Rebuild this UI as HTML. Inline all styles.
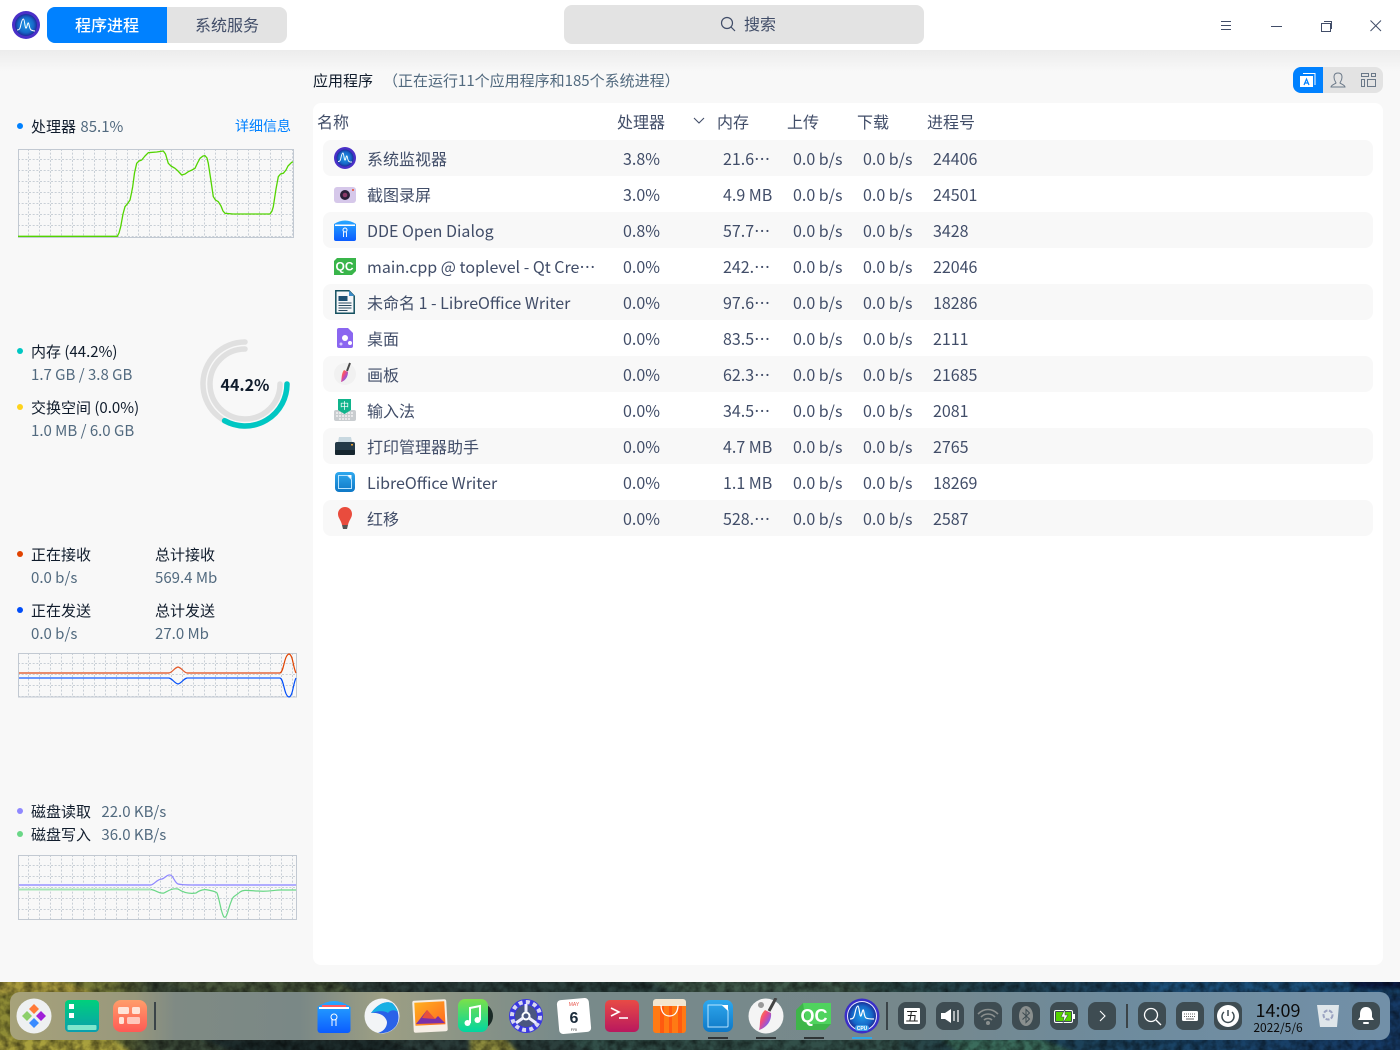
<!DOCTYPE html>
<html lang="zh"><head><meta charset="utf-8"><title>系统监视器</title>
<style>
*{box-sizing:border-box;margin:0;padding:0}
html,body{width:1400px;height:1050px;overflow:hidden;background:#f8f8f8;font-family:"Noto Sans CJK SC","Liberation Sans",sans-serif;font-size:15px;color:#414d68}
.a{position:absolute;white-space:nowrap}
.k{color:#101c2c}.g{color:#526a7f}
.dot{position:absolute;width:6px;height:6px;border-radius:50%}
.row{position:absolute;left:313px;width:1070px;height:36px;font-size:16px;line-height:36px}
.row.s::before{content:"";position:absolute;left:10px;right:10px;top:0;bottom:0;background:#f8f8f8;border-radius:8px}
.row span{position:absolute;top:0;white-space:nowrap}
.row span:nth-of-type(1){left:54px}.row span:nth-of-type(2){left:310px}.row span:nth-of-type(3){left:410px}.row span:nth-of-type(4){left:480px}.row span:nth-of-type(5){left:550px}.row span:nth-of-type(6){left:620px}
.row svg{position:absolute;left:20px;top:6px;width:24px;height:24px}
.th{position:absolute;top:109px;font-size:16px;line-height:24px}
.tray{position:absolute;top:1002px;width:28px;height:28px;border-radius:8px;background:#3e4c52}
.tray svg{position:absolute;left:0;top:0;width:28px;height:28px}
.di{position:absolute;top:998px;width:36px;height:36px}
.run{position:absolute;top:1037px;width:20px;height:2px;background:#2f3436}
.sep{position:absolute;width:2px;background:#3b4448}
</style></head><body>

<!-- wallpaper -->
<svg class="a" style="left:0;top:982px" width="1400" height="68" viewBox="0 0 1400 68">
<defs>
<linearGradient id="wp" x1="0" x2="1" y1="0" y2="0"><stop offset="0" stop-color="#8f8c35"/><stop offset=".08" stop-color="#6f7538"/><stop offset=".11" stop-color="#3c4a38"/><stop offset=".3" stop-color="#2b3c3a"/><stop offset=".5" stop-color="#2c4340"/><stop offset=".62" stop-color="#2f4a44"/><stop offset=".72" stop-color="#1f4050"/><stop offset=".85" stop-color="#1a4468"/><stop offset="1" stop-color="#163a66"/></linearGradient>
<linearGradient id="dk" x1="0" x2="1" y1="0" y2="0"><stop offset="0" stop-color="#a7a27a"/><stop offset=".09" stop-color="#98987c"/><stop offset=".12" stop-color="#7f8a84"/><stop offset=".21" stop-color="#7a8886"/><stop offset=".27" stop-color="#9d9f84"/><stop offset=".33" stop-color="#8a9486"/><stop offset=".4" stop-color="#788a8a"/><stop offset=".65" stop-color="#76888c"/><stop offset=".8" stop-color="#6e8b9d"/><stop offset="1" stop-color="#7290a8"/></linearGradient>
<radialGradient id="mon"><stop offset="0" stop-color="#1f9be8"/><stop offset=".7" stop-color="#1668c8"/><stop offset="1" stop-color="#1a2f9a"/></radialGradient>
<linearGradient id="tl" x1="0" x2="0" y1="0" y2="1"><stop offset="0" stop-color="#00d07c"/><stop offset="1" stop-color="#0a9fae"/></linearGradient>
<linearGradient id="or" x1="0" x2="0" y1="0" y2="1"><stop offset="0" stop-color="#ff9d6a"/><stop offset="1" stop-color="#ff5a55"/></linearGradient>
<linearGradient id="bl" x1="0" x2="0" y1="0" y2="1"><stop offset="0" stop-color="#28a8ff"/><stop offset="1" stop-color="#0b5cff"/></linearGradient>
<linearGradient id="ws" x1="0" x2="0" y1="0" y2="1"><stop offset="0" stop-color="#2fa8ee"/><stop offset="1" stop-color="#0f78c6"/></linearGradient>
<linearGradient id="ms" x1="0" x2="0" y1="0" y2="1"><stop offset="0" stop-color="#7be04a"/><stop offset="1" stop-color="#00d6a0"/></linearGradient>
<linearGradient id="tm" x1="0" x2="0" y1="0" y2="1"><stop offset="0" stop-color="#e84b45"/><stop offset="1" stop-color="#b9185e"/></linearGradient>
<linearGradient id="ph" x1="0" x2="1" y1="0" y2="1"><stop offset="0" stop-color="#ffb020"/><stop offset="1" stop-color="#ff6a20"/></linearGradient>
<linearGradient id="pk" x1="0" x2="1" y1="0" y2="1"><stop offset="0" stop-color="#ff9b1f"/><stop offset=".4" stop-color="#f04a80"/><stop offset=".75" stop-color="#7a5cf0"/><stop offset="1" stop-color="#32b8f0"/></linearGradient>
<filter id="bur"><feGaussianBlur stdDeviation="2"/></filter>
<filter id="mot" x="0" y="0" width="100%" height="100%"><feTurbulence type="fractalNoise" baseFrequency=".12" numOctaves="3" seed="4"/><feColorMatrix values="0 0 0 0 0 0 0 0 0 0 0 0 0 0 0 1.800 0 0 0 -.55"/></filter>
</defs>
<rect width="1400" height="68" fill="url(#wp)"/>
<g filter="url(#bur)">
<path d="M-5-5H55L95 12H-5Z" fill="#a89a3e"/><path d="M-5 56H112L135 73H-5Z" fill="#a9a03c"/>
<path d="M150-5H330L360 12H200Z" fill="#46543a"/><path d="M640-5H830L880 12H680Z" fill="#3f5a4c"/>
<path d="M200 56H380L420 73H240Z" fill="#1d2a2c"/><path d="M470 56H505L520 73H470Z" fill="#8c8a3c"/><path d="M560 56H900V73H600Z" fill="#314f48"/>
<path d="M1120-5H1405V12H1150Z" fill="#1f4f78"/><path d="M940 56H1040L1080 73H960Z" fill="#3a6c5c"/>
<path d="M1340-5H1405V8H1360Z" fill="#0b1f44"/>
</g>
<rect width="1400" height="68" filter="url(#mot)" opacity=".55"/>
<rect x="10" y="10" width="1380" height="48" rx="10" fill="url(#dk)"/>
</svg>

<!-- titlebar -->
<div class="a" style="left:0;top:50px;width:1400px;height:22px;background:linear-gradient(#ececec,#f8f8f8)"></div>
<div class="a" style="left:0;top:0;width:1400px;height:50px;background:#fff"></div>

<svg class="a" style="left:11px;top:10px" width="30" height="30" viewBox="0 0 30 30">
<circle cx="15" cy="15" r="14" fill="#4a30c8"/><circle cx="15" cy="15" r="11" fill="url(#mon)"/>
<path d="M6 20c2.500 0 3-1 3.800-5s1.700-6 2.700-6 1.300 8 2.300 9 1.300-4 2.300-5 1 6 3 7 2 1 3.900 1" fill="none" stroke="#fff" stroke-width="1"/></svg>

<div class="a" style="left:47px;top:7px;width:240px;height:36px;border-radius:8px;background:#e3e3e3;overflow:hidden">
<div class="a" style="left:0;top:-1px;width:120px;height:37px;background:#0081ff;color:#fff;font-size:16px;line-height:36px;text-align:center;font-weight:500">程序进程</div>
<div class="a" style="left:120px;top:-1px;width:120px;height:36px;color:#414d68;font-size:16px;line-height:36px;text-align:center">系统服务</div>
</div>

<div class="a" style="left:564px;top:5px;width:360px;height:39px;border-radius:8px;background:#e3e3e3"></div>
<svg class="a" style="left:720px;top:16px" width="16" height="16" viewBox="0 0 16 16" fill="none" stroke="#414d68" stroke-width="1.2"><circle cx="7" cy="7" r="5.500"/><path d="M11 11l4 4"/></svg>
<div class="a" style="left:744px;top:11px;font-size:16px;line-height:24px;color:#414d68">搜索</div>

<svg class="a" style="left:1200px;top:0" width="200" height="50" viewBox="0 0 200 50" fill="none" stroke="#414d68" stroke-width="1">
<path d="M21 21.500H31M21 25.500H31M21 29.500H31"/><path d="M71 26.500H82"/>
<rect x="121.500" y="23.500" width="9" height="8"/><path d="M124 21.500H131.500V29"/>
<path d="M170.500 20.500L181 31M181 20.500L170.500 31"/></svg>

<!-- main -->
<div class="a" style="left:313px;top:103px;width:1070px;height:862px;background:#fff;border-radius:8px"></div>
<div class="a k" style="left:313px;top:69px;font-size:15px;line-height:24px">应用程序</div>
<div class="a" style="left:383px;top:69px;font-size:15px;line-height:24px;color:#526a7f">（正在运行11个应用程序和185个系统进程）</div>

<div class="a" style="left:1293px;top:67px;width:90px;height:26px;border-radius:8px;background:#e3e3e3;overflow:hidden"><div class="a" style="left:0;top:0;width:30px;height:26px;background:#0081ff"></div></div>
<svg class="a" style="left:1293px;top:67px" width="90" height="26" viewBox="0 0 90 26" fill="none">
<rect x="7" y="9" width="13" height="11" fill="#fff"/><path d="M10 6.500H22V18" stroke="#fff"/>
<path d="M11 18l2.500-6 2.500 6M12 16h3" stroke="#0081ff" stroke-width="1.200"/>
<path d="M38 20c0-2 4-3 5-4 0-1-2-2-2-6 0-3 2-4 4-4s4 1 4 4c0 4-2 5-2 6 1 1 5 2 5 4z" stroke="#6a7888"/>
<path d="M68.500 6.500H75.500V9.500H68.500zM78.500 6.500H82.500V9.500H78.500zM68.500 12.500H71.500V19.500H68.500zM74.500 12.500H82.500V19.500H74.500z" stroke="#6a7888"/></svg>

<!-- table header -->
<div class="th" style="left:317px">名称</div>
<div class="th" style="left:617px">处理器</div>
<svg class="a" style="left:693px;top:117px" width="12" height="8" viewBox="0 0 12 8" fill="none" stroke="#414d68" stroke-width="1.100"><path d="M1 1l5 5 5-5"/></svg>
<div class="th" style="left:717px">内存</div>
<div class="th" style="left:787px">上传</div>
<div class="th" style="left:857px">下载</div>
<div class="th" style="left:927px">进程号</div>

<!-- rows -->
<div class="row s" style="top:140px"><svg viewBox="0 0 24 24"><circle cx="12" cy="12" r="11" fill="#4a30c8"/><circle cx="12" cy="12" r="8.500" fill="url(#mon)"/><path d="M5 15.500c2 0 2.300-.7 3-4s1.300-4.500 2-4.500 1 6 1.800 7 1-3 1.800-4 .8 4.500 2.400 5.500 1.500.5 3 .5" fill="none" stroke="#fff" stroke-width=".9"/></svg><span>系统监视器</span><span>3.8%</span><span>21.6…</span><span>0.0 b/s</span><span>0.0 b/s</span><span>24406</span></div>
<div class="row" style="top:176px"><svg viewBox="0 0 24 24"><rect x="1" y="5" width="22" height="16" rx="3" fill="#d6c8ea"/><circle cx="12" cy="13" r="5" fill="#2a2038"/><circle cx="12" cy="13" r="2.300" fill="#8a3a68"/><rect x="19" y="7" width="2" height="2" fill="#e86a5a"/></svg><span>截图录屏</span><span>3.0%</span><span>4.9 MB</span><span>0.0 b/s</span><span>0.0 b/s</span><span>24501</span></div>
<div class="row s" style="top:212px"><svg viewBox="0 0 24 24"><path d="M1 6Q12-1 23 6V21a2 2 0 0 1-2 2H3a2 2 0 0 1-2-2z" fill="url(#bl)"/><path d="M2 6.500h20v1.500H2z" fill="#fff"/><circle cx="12" cy="12" r="2" fill="none" stroke="#fff"/><path d="M10.500 14v5M13.500 14v5" stroke="#fff" stroke-width=".9"/></svg><span>DDE Open Dialog</span><span>0.8%</span><span>57.7…</span><span>0.0 b/s</span><span>0.0 b/s</span><span>3428</span></div>
<div class="row" style="top:248px"><svg viewBox="0 0 24 24"><path d="M4 4h19v13l-4 4H1V7z" fill="#39b54a"/><text x="11.500" y="16.500" font-size="12" font-weight="700" text-anchor="middle" fill="#fff" font-family="Liberation Sans,sans-serif">QC</text></svg><span>main.cpp @ toplevel - Qt Cre…</span><span>0.0%</span><span>242.…</span><span>0.0 b/s</span><span>0.0 b/s</span><span>22046</span></div>
<div class="row s" style="top:284px"><svg viewBox="0 0 24 24"><path d="M2.800 .8H16L21.200 6V23.200H2.800z" fill="#f4f6f8" stroke="#14505f" stroke-width="1.500"/><path d="M16 .5V6H21.500z" fill="#3c8cc8"/><rect x="5.500" y="6" width="9" height="5" fill="#1c4f72"/><path d="M5.500 13h13M5.500 15.500h13M5.500 18h13M5.500 20.500h9" stroke="#2a4a60"/></svg><span>未命名 1 - LibreOffice Writer</span><span>0.0%</span><span>97.6…</span><span>0.0 b/s</span><span>0.0 b/s</span><span>18286</span></div>
<div class="row" style="top:320px"><svg viewBox="0 0 24 24"><path d="M4 4a2 2 0 0 1 2-2h9l5 5v13a2 2 0 0 1-2 2H6a2 2 0 0 1-2-2z" fill="#8a66f0"/><circle cx="12" cy="12" r="3" fill="#fff"/><circle cx="17" cy="17" r="2" fill="#fff"/><circle cx="8" cy="18" r="1.500" fill="#d8ccff"/></svg><span>桌面</span><span>0.0%</span><span>83.5…</span><span>0.0 b/s</span><span>0.0 b/s</span><span>2111</span></div>
<div class="row s" style="top:356px"><svg viewBox="0 0 24 24"><circle cx="12" cy="12" r="11" fill="#f1f1f1"/><path d="M17 1l-3 8" stroke="#4a4a4a" stroke-width="2"/><path d="M11 8l4 2c0 5-3 9-7 10 1-3 0-8 3-12z" fill="url(#pk)"/></svg><span>画板</span><span>0.0%</span><span>62.3…</span><span>0.0 b/s</span><span>0.0 b/s</span><span>21685</span></div>
<div class="row" style="top:392px"><svg viewBox="0 0 24 24"><rect x="1" y="12" width="22" height="11" rx="2" fill="#c9cdd0"/><path d="M3 15h18M3 18h18M6 21h12" stroke="#f2f2f2" stroke-width="1.400" stroke-dasharray="2 1"/><path d="M5 1h13v11l-6.500 4L5 12z" fill="#10b48c"/><text x="11.500" y="11" font-size="9" text-anchor="middle" fill="#fff">中</text></svg><span>输入法</span><span>0.0%</span><span>34.5…</span><span>0.0 b/s</span><span>0.0 b/s</span><span>2081</span></div>
<div class="row s" style="top:428px"><svg viewBox="0 0 24 24"><path d="M6 3h12l1 5H5z" fill="#c8d8e0"/><rect x="2" y="8" width="20" height="13" rx="2" fill="#243a48"/><rect x="2" y="16" width="20" height="5" rx="1" fill="#16262f"/><rect x="18" y="10" width="2" height="1.500" fill="#e8a030"/></svg><span>打印管理器助手</span><span>0.0%</span><span>4.7 MB</span><span>0.0 b/s</span><span>0.0 b/s</span><span>2765</span></div>
<div class="row" style="top:464px"><svg viewBox="0 0 24 24"><rect x="2" y="2" width="20" height="20" rx="4" fill="url(#ws)"/><path d="M5.500 5.500h9L18.500 9.500V18.500H5.500z" fill="none" stroke="#b8e4ff"/><path d="M14.500 5h4v4z" fill="#fff"/></svg><span>LibreOffice Writer</span><span>0.0%</span><span>1.1 MB</span><span>0.0 b/s</span><span>0.0 b/s</span><span>18269</span></div>
<div class="row s" style="top:500px"><svg viewBox="0 0 24 24"><path d="M12 1c4 0 7 3 7 7 0 4-3 6-4 11H9C8 14 5 12 5 8c0-4 3-7 7-7z" fill="#e94c3d"/><path d="M9 19h6l-1 4h-4z" fill="#555"/></svg><span>红移</span><span>0.0%</span><span>528.…</span><span>0.0 b/s</span><span>0.0 b/s</span><span>2587</span></div>

<!-- CPU -->
<div class="dot" style="left:17px;top:123px;background:#0081ff"></div>
<div class="a k" style="left:31px;top:115px;line-height:24px">处理器 <span class="g" style="margin-left:1px">85.1%</span></div>
<div class="a" style="left:235px;top:114px;line-height:24px;font-size:14px;color:#0081ff">详细信息</div>
<svg class="a" style="left:18px;top:149px" width="277" height="90" viewBox="0 0 277 90" fill="none">
<defs><pattern id="gr" width="11" height="11" patternUnits="userSpaceOnUse"><path d="M10.500 0V11M0 10.500H11" stroke="#c8cfd6" stroke-width="1" stroke-dasharray="2 1.670"/></pattern></defs>
<rect x=".5" y=".5" width="275" height="88" fill="url(#gr)" stroke="#c2c9d2"/>
<polyline stroke-linejoin="round" points="0,87.300 99.300,87.300 101,84 102.700,77.700 105,65 107,57.700 110,54 112,51 113.500,44 114.700,37.700 116.500,24 118.700,14.300 121,12 123.700,11 127,7 130.300,3.700 138.700,3 145.300,2 147.500,5 150.300,14.300 153,17 157,19.300 160,22 163.700,26 167,25 170.300,22.700 174,21 177,19.300 179.500,14 182,9.300 185,7 187,6.700 189,9 190.300,14.300 193,32 195.300,47.700 197.500,51 200.300,52.700 203,57 205,62 207,64.300 215,65 252,65 254,62 255.300,57.700 258,40 260.300,27.700 262.500,25 265.300,24.300 268,21 270,17 273.700,13.300 275,13" stroke="#52d400" stroke-width="1.300"/></svg>

<!-- memory -->
<div class="dot" style="left:17px;top:348px;background:#00c7c3"></div>
<div class="a k" style="left:31px;top:340px;line-height:24px">内存 (44.2%)</div>
<div class="a g" style="left:31px;top:363px;line-height:24px">1.7 GB / 3.8 GB</div>
<div class="dot" style="left:17px;top:404px;background:#fed31c"></div>
<div class="a k" style="left:31px;top:396px;line-height:24px">交换空间 (0.0%)</div>
<div class="a g" style="left:31px;top:419px;line-height:24px">1.0 MB / 6.0 GB</div>
<svg class="a" style="left:195px;top:334px" width="100" height="100" viewBox="0 0 100 100" fill="none" stroke-linecap="round" stroke-width="5.500">
<path d="M92 50A42 42 0 1 1 50 8" stroke="#e0e0e0"/>
<path d="M85 50A35 35 0 1 1 50 15" stroke="#e0e0e0"/>
<path d="M92 50A42 42 0 0 1 29.600 86.700" stroke="#00c7c3"/></svg>
<div class="a" style="left:195px;top:372px;width:100px;text-align:center;font-size:16px;line-height:24px;font-weight:700;color:#101c2c">44.2%</div>

<!-- network -->
<div class="dot" style="left:17px;top:551px;background:#e14300"></div>
<div class="a k" style="left:31px;top:543px;line-height:24px">正在接收</div>
<div class="a g" style="left:31px;top:566px;line-height:24px">0.0 b/s</div>
<div class="a k" style="left:155px;top:543px;line-height:24px">总计接收</div>
<div class="a g" style="left:155px;top:566px;line-height:24px">569.4 Mb</div>
<div class="dot" style="left:17px;top:607px;background:#004df9"></div>
<div class="a k" style="left:31px;top:599px;line-height:24px">正在发送</div>
<div class="a g" style="left:31px;top:622px;line-height:24px">0.0 b/s</div>
<div class="a k" style="left:155px;top:599px;line-height:24px">总计发送</div>
<div class="a g" style="left:155px;top:622px;line-height:24px">27.0 Mb</div>
<svg class="a" style="left:18px;top:653px" width="280" height="46" viewBox="0 0 280 46" fill="none">
<defs><pattern id="gr2" width="11" height="11" patternUnits="userSpaceOnUse"><path d="M10.500 0V11M0 10.500H11" stroke="#c8cfd6" stroke-width="1" stroke-dasharray="2 1.670"/></pattern></defs>
<rect x=".5" y=".5" width="278" height="43.500" fill="url(#gr2)" stroke="#c2c9d2"/>
<path d="M1 20H151" stroke="#e98c6c" stroke-width="2"/>
<path d="M151 20C155 19 156 15 160 14 164 15 165 19 169 20" stroke="#e2592a" stroke-width="1.200"/>
<path d="M169 20H262" stroke="#e98c6c" stroke-width="2"/>
<path d="M262 20C266 19 266 2 271 1 275 2 275 14 278 20" stroke="#e14300" stroke-width="1.200"/>
<path d="M1 25H151" stroke="#3a78ff" stroke-width="1.600"/>
<path d="M151 25C155 26 156 30 160 31 164 30 165 26 169 25" stroke="#004df9" stroke-width="1.200"/>
<path d="M169 25H262" stroke="#3a78ff" stroke-width="1.600"/>
<path d="M262 25C266 26 266 43 271 44 275 43 275 31 278 25" stroke="#004df9" stroke-width="1.200"/></svg>

<!-- disk -->
<div class="dot" style="left:17px;top:808px;background:#8f88ff"></div>
<div class="a k" style="left:31px;top:800px;line-height:24px">磁盘读取 <span class="g" style="margin-left:7px">22.0 KB/s</span></div>
<div class="dot" style="left:17px;top:831px;background:#6ad787"></div>
<div class="a k" style="left:31px;top:823px;line-height:24px">磁盘写入 <span class="g" style="margin-left:7px">36.0 KB/s</span></div>
<svg class="a" style="left:18px;top:855px" width="280" height="66" viewBox="0 0 280 66" fill="none">
<defs><pattern id="gr3" width="11" height="11" patternUnits="userSpaceOnUse"><path d="M10.500 0V11M0 10.500H11" stroke="#c8cfd6" stroke-width="1" stroke-dasharray="2 1.670"/></pattern></defs>
<rect x=".5" y=".5" width="278" height="64" fill="url(#gr3)" stroke="#c2c9d2"/>
<path d="M1 30H133" stroke="#b0acff" stroke-width="2"/>
<path d="M133 30C137 29 139 24 144 24 147 23 149 20 151 20 155 19 156 27 160 29 164 30 170 30 175 30" stroke="#8f88ff" stroke-width="1.200"/>
<path d="M175 30H278" stroke="#b0acff" stroke-width="2"/>
<path d="M1 34.500H133" stroke="#a6e4b6" stroke-width="2"/>
<path d="M133 34.500C138 35 141 39 146 38 150 36 154 33 160 34 166 38 172 39 178 38 182 35 186 34 190 35 194 36 197 36 199 38 202 46 203 58 206 62 209 64 210 54 213 47 215 40 218 41 222 37 226 34 232 36 240 36 250 37 256 35 262 35L278 35" stroke="#6ad787" stroke-width="1.200"/></svg>

<!-- dock left icons -->
<svg class="di" style="left:16px" viewBox="0 0 36 36"><circle cx="18" cy="18" r="17.500" fill="#eef0f1"/><path d="M18 6l5 5-5 5-5-5z" fill="#ff7a38"/><path d="M18 20l5 5-5 5-5-5z" fill="#3a8cff"/><path d="M11 13l5 5-5 5-5-5z" fill="#8ccf6a"/><path d="M25 13l5 5-5 5-5-5z" fill="#a020d8"/></svg>
<svg class="di" style="left:64px" viewBox="0 0 36 36"><rect x="1" y="2" width="34" height="32" rx="4" fill="url(#tl)"/><rect x="5" y="6" width="5" height="5" fill="#fff"/><rect x="5" y="15" width="5" height="5" fill="#fff"/><rect x="3.500" y="27" width="29" height="5" rx="1" fill="#7fe6cc"/></svg>
<svg class="di" style="left:112px" viewBox="0 0 36 36"><rect x="1" y="2" width="34" height="32" rx="8" fill="url(#or)"/><rect x="6" y="9" width="11" height="7" rx="1.500" fill="#ffe4d8"/><rect x="20" y="9" width="8" height="7" rx="1.500" fill="#ffe4d8"/><rect x="7" y="19" width="5" height="7" rx="1.500" fill="#ffe4d8"/><rect x="15" y="19" width="13" height="7" rx="1.500" fill="#ffc8bc"/></svg>
<div class="sep" style="left:154px;top:1002px;height:28px"></div>

<!-- dock center icons -->
<svg class="di" style="left:316px" viewBox="0 0 36 36"><path d="M1.500 9Q18-3 34.500 9V32a3 3 0 0 1-3 3H4.500a3 3 0 0 1-3-3z" fill="url(#bl)"/><path d="M3 9h30v2H3z" fill="#fff"/><path d="M6 7h24v2H6z" fill="#ff5a60"/><circle cx="18" cy="19" r="3" fill="none" stroke="#fff"/><path d="M16 21v7M20 21v7" stroke="#fff"/></svg>
<svg class="di" style="left:364px" viewBox="0 0 36 36"><circle cx="18" cy="18" r="17.500" fill="#f2f4f6"/><path d="M7 15C12 8 20 2 28 5 34 10 37 20 32 28 28 33 22 36 14 35 20 33 23 29 23 24 22 18 15 14 7 15Z" fill="#2a62e8"/><path d="M7 15C12 8 20 2 28 5 31 8 33 11 34 14 30 11 26 12 24 15 20 12 13 13 7 15Z" fill="#18b0e4"/></svg>
<svg class="di" style="left:412px" viewBox="0 0 36 36"><rect x="1" y="2" width="34" height="32" rx="2" fill="#f6efe6" transform="rotate(-3 18 18)"/><rect x="3" y="4" width="30" height="23" fill="url(#ph)" transform="rotate(-3 18 18)"/><path d="M4 26l11-14 8 9 3-3 7 7z" fill="#7a30a8"/><path d="M10 20l5-8 8 9z" fill="#e8503a"/></svg>
<svg class="di" style="left:457px" viewBox="0 0 36 36"><circle cx="23" cy="18" r="13" fill="#1a2a26"/><rect x="1" y="1" width="30" height="33" rx="7" fill="url(#ms)"/><path d="M13 25V10l10-2v14" fill="none" stroke="#fff" stroke-width="2"/><circle cx="10.500" cy="25" r="3" fill="#fff"/><circle cx="20.500" cy="22" r="3" fill="#fff"/></svg>
<svg class="di" style="left:508px" viewBox="0 0 36 36"><circle cx="18" cy="18" r="17" fill="#3a38e0"/><circle cx="18" cy="18" r="14" fill="none" stroke="#d8d8f0" stroke-width="4" stroke-dasharray="4 3.300"/><circle cx="18" cy="18" r="11" fill="#4a5680"/><circle cx="18" cy="18" r="3.500" fill="none" stroke="#fff" stroke-width="2"/><path d="M18 14V6M15 20l-7 5M21 20l7 5" stroke="#eef" stroke-width="3"/></svg>
<svg class="di" style="left:556px" viewBox="0 0 36 36"><rect x="2" y="1" width="32" height="34" rx="4" fill="#fff" transform="rotate(-5 18 18)"/><text x="18" y="8" font-size="5" text-anchor="middle" fill="#e85a50" font-family="Liberation Sans,sans-serif">MAY</text><text x="18" y="25" font-size="16" font-weight="700" text-anchor="middle" fill="#1a2a3a" font-family="Liberation Sans,sans-serif">6</text><text x="18" y="33" font-size="4" text-anchor="middle" fill="#444" font-family="Liberation Sans,sans-serif">FRI</text></svg>
<svg class="di" style="left:604px" viewBox="0 0 36 36"><rect x="1" y="2" width="34" height="32" rx="5" fill="url(#tm)"/><path d="M7 10l8 4-8 4" fill="none" stroke="#fff" stroke-width="1.600"/><path d="M15 20h9" stroke="#fff" stroke-width="1.600"/></svg>
<svg class="di" style="left:652px" viewBox="0 0 36 36"><rect x="1" y="2" width="33" height="33" rx="3" fill="#ff7a14"/><path d="M8 2h4v33H8zM17 2h3v33h-3zM26 2h4v33h-4z" fill="#ff5a10"/><path d="M1 8V4a3 3 0 0 1 3-3h27a3 3 0 0 1 3 3v4z" fill="#f4e6d0"/><path d="M9 7c0 8 4 11 8.500 11S26 15 26 7" fill="none" stroke="#fff" stroke-width="1.300"/></svg>
<svg class="di" style="left:700px" viewBox="0 0 36 36"><rect x="3" y="2" width="30" height="32" rx="7" fill="url(#ws)"/><path d="M8 7h14l6 5v16a1 1 0 0 1-1 1H8z" fill="none" stroke="#b8e4ff"/><path d="M22 7h6v6z" fill="#fff"/></svg>
<svg class="di" style="left:748px" viewBox="0 0 36 36"><circle cx="18" cy="18" r="17.500" fill="#f4f4f4"/><circle cx="13" cy="7" r="3" fill="#9a9a9a"/><path d="M28 0l-7 13" stroke="#444" stroke-width="3"/><path d="M17 12l6 3c1 8-5 15-12 17 2-6-1-13 6-20z" fill="url(#pk)"/></svg>
<svg class="di" style="left:796px" viewBox="0 0 36 36"><path d="M7 5h28v21l-6 6H0V12z" fill="#3eb64a"/><path d="M7 5h28v21H10z" fill="#4fd35e"/><text x="18" y="24" font-size="18" font-weight="700" text-anchor="middle" fill="#fff" font-family="Liberation Sans,sans-serif">QC</text></svg>
<svg class="di" style="left:844px" viewBox="0 0 36 36"><circle cx="18" cy="18" r="17.500" fill="#3a2ec8"/><circle cx="18" cy="18" r="15" fill="#e8e8ff"/><circle cx="18" cy="18" r="14" fill="url(#mon)"/><path d="M6 21c3 0 4-1 5-6s2-7 3-7 1.500 9 2.500 10 1.500-5 2.500-6 1 7 3 8 4 1 8 1" fill="none" stroke="#fff" stroke-width="1.200"/><rect x="11" y="27" width="14" height="6" rx="3" fill="#3aa0e8"/><text x="18" y="32" font-size="5" font-weight="700" text-anchor="middle" fill="#fff" font-family="Liberation Sans,sans-serif">CPU</text></svg>
<div class="run" style="left:708px"></div><div class="run" style="left:756px"></div><div class="run" style="left:804px"></div><div class="run" style="left:852px;background:#2fa8e8"></div>
<div class="sep" style="left:886px;top:1002px;height:28px"></div>

<!-- tray -->
<div class="tray" style="left:898px"><svg viewBox="0 0 28 28"><rect x="6" y="6" width="16" height="16" rx="1" fill="#fff"/><text x="14" y="19" font-size="13" text-anchor="middle" fill="#222">五</text></svg></div>
<div class="tray" style="left:936px"><svg viewBox="0 0 28 28"><path d="M5 11h4l6-4v14l-6-4H5z" fill="#fff"/><path d="M18 9v10M22 8v12" stroke="#fff" stroke-width="1.200"/></svg></div>
<div class="tray" style="left:974px"><svg viewBox="0 0 28 28" fill="none" stroke="#8a8f8e" stroke-width="1.600"><path d="M4 12c6-6 14-6 20 0M7 15c4-4 10-4 14 0M10 18c2-2 6-2 8 0"/><circle cx="14" cy="21" r="2" fill="#8a8f8e" stroke="none"/></svg></div>
<div class="tray" style="left:1012px"><svg viewBox="0 0 28 28"><ellipse cx="14" cy="14" rx="7" ry="10" fill="#8a8f8e"/><path d="M10.500 10.500l7 6.500-3.500 3.500v-13l3.500 3.500-7 6.500" fill="none" stroke="#3e4c52"/></svg></div>
<div class="tray" style="left:1050px"><svg viewBox="0 0 28 28"><rect x="4.500" y="8.500" width="18" height="12" rx="1.500" fill="none" stroke="#fff"/><rect x="6" y="10" width="15" height="9" fill="#55d400"/><rect x="23" y="12" width="2" height="5" fill="#fff"/><path d="M15 7l-4 8h3l-1 6 5-8h-3z" fill="#fff" stroke="#3e4c52" stroke-width=".6"/></svg></div>
<div class="tray" style="left:1088px"><svg viewBox="0 0 28 28" fill="none" stroke="#fff" stroke-width="1.100"><path d="M12 9l5 5-5 5"/></svg></div>
<div class="sep" style="left:1126px;top:1004px;height:24px"></div>
<div class="tray" style="left:1138px"><svg viewBox="0 0 28 28" fill="none" stroke="#fff" stroke-width="1.300"><circle cx="13" cy="13" r="6.500"/><path d="M18 18l5 5"/></svg></div>
<div class="tray" style="left:1176px"><svg viewBox="0 0 28 28"><rect x="6" y="9" width="16" height="10" rx="1.500" fill="#fff"/><path d="M8 12h12M8 14.500h12" stroke="#666" stroke-dasharray="1 1"/><path d="M10 17h8" stroke="#666"/></svg></div>
<div class="tray" style="left:1214px"><svg viewBox="0 0 28 28"><circle cx="14" cy="14" r="11" fill="#fff"/><path d="M10 10a6 6 0 1 0 8 0M14 8v6" fill="none" stroke="#3e4c52" stroke-width="1.500"/></svg></div>
<div class="a" style="left:1248px;top:998px;width:60px;text-align:center;font-size:18px;line-height:24px;color:#0b0b0b">14:09</div>
<div class="a" style="left:1248px;top:1019px;width:60px;text-align:center;font-size:12px;line-height:18px;color:#0b0b0b">2022/5/6</div>
<svg class="a" style="left:1314px;top:1002px" width="28" height="28" viewBox="0 0 28 28"><path d="M3 3h22l-2 22H6z" fill="#dfe6ea"/><circle cx="14" cy="13" r="4.500" fill="none" stroke="#9aa2c0" stroke-width="2" stroke-dasharray="4 1.500"/></svg>
<div class="tray" style="left:1352px"><svg viewBox="0 0 28 28"><path d="M14 5c4 0 6 3 6 7v3l2 3H6l2-3v-3c0-4 2-7 6-7z" fill="#fff"/><rect x="11" y="20" width="6" height="2" rx="1" fill="#fff"/></svg></div>

</body></html>
